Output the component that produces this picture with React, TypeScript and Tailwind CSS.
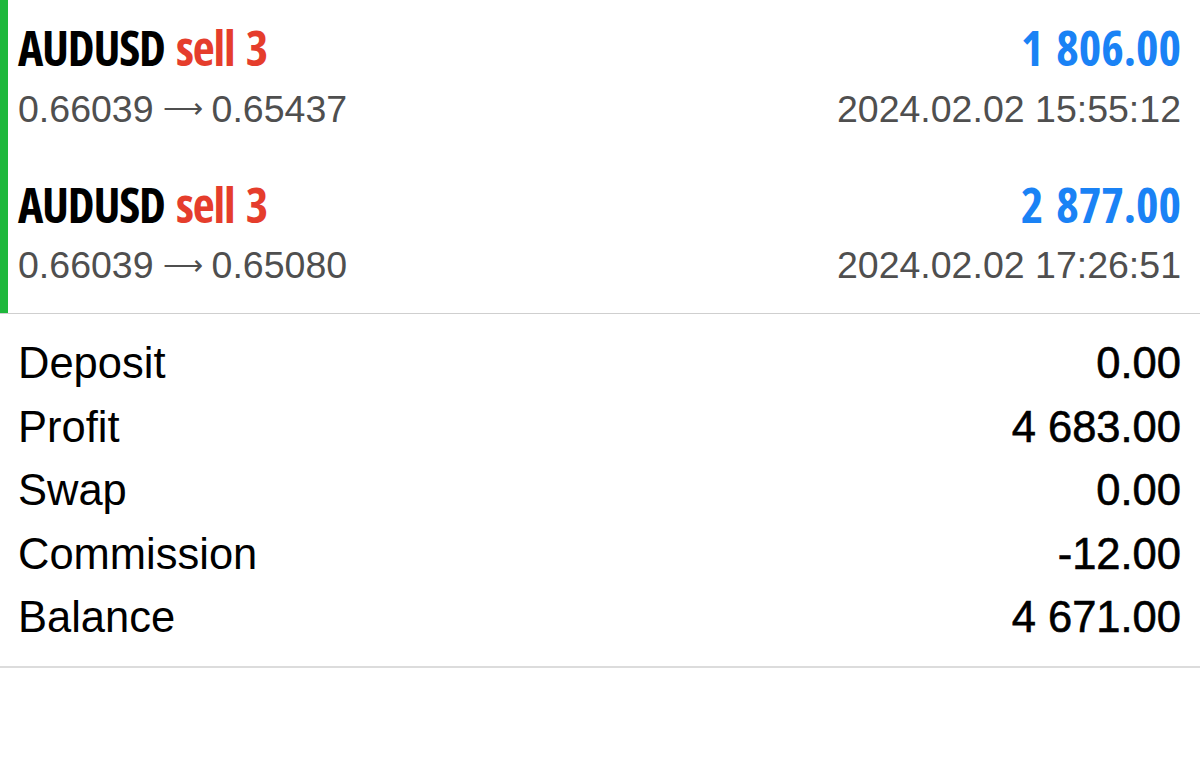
import React from "react";

function Trade({ price, date, amount }: { price: [string, string]; date: string; amount: string }) {
  return (
    <div className="flex flex-col pl-[10px] pr-[19px] pt-[20px] pb-[21px] h-[156.5px]">
      <div className="flex justify-between items-center h-[56px] font-['Open_Sans',sans-serif] font-bold text-[48px] [font-stretch:75%] [word-spacing:4px]">
        <div className="text-black tracking-[-1.2px]">
          AUDUSD <span className="text-[#e53d2c]">sell 3</span>
        </div>
        <div className="text-[#1a82f5] tracking-[0px]">{amount}</div>
      </div>
      <div className="mt-[8px] flex justify-between items-center h-[50px] text-[37.5px] text-[#4f4f4f] font-['Liberation_Sans',Arial,sans-serif]">
        <div className="flex items-center">
          <span>{price[0]}</span>
          <span className="font-['DejaVu_Sans',sans-serif] text-[28px] mx-[9px] font-extralight">⟶</span>
          <span>{price[1]}</span>
        </div>
        <div>{date}</div>
      </div>
    </div>
  );
}

const rows = [
  ["Deposit", "0.00"],
  ["Profit", "4 683.00"],
  ["Swap", "0.00"],
  ["Commission", "-12.00"],
  ["Balance", "4 671.00"],
];

export default function App() {
  return (
    <div className="w-[1200px] h-[767px] bg-white overflow-hidden">
      <div className="border-l-[8px] border-[#1eb83c]">
        <Trade price={["0.66039", "0.65437"]} date="2024.02.02 15:55:12" amount="1 806.00" />
        <Trade price={["0.66039", "0.65080"]} date="2024.02.02 17:26:51" amount="2 877.00" />
      </div>
      <div className="h-px bg-[#cfcfcf]" />
      <div className="flex flex-col pt-[18px] pb-[16px] pl-[18px] pr-[19px] font-['Liberation_Sans',Arial,sans-serif] text-[43.5px] text-black">
        {rows.map(([k, v]) => (
          <div key={k} className="flex justify-between items-center h-[63.5px]">
            <div>{k}</div>
            <div className="[-webkit-text-stroke:0.6px_black]">{v}</div>
          </div>
        ))}
      </div>
      <div className="h-[2px] bg-[#dcdcdc]" />
    </div>
  );
}
